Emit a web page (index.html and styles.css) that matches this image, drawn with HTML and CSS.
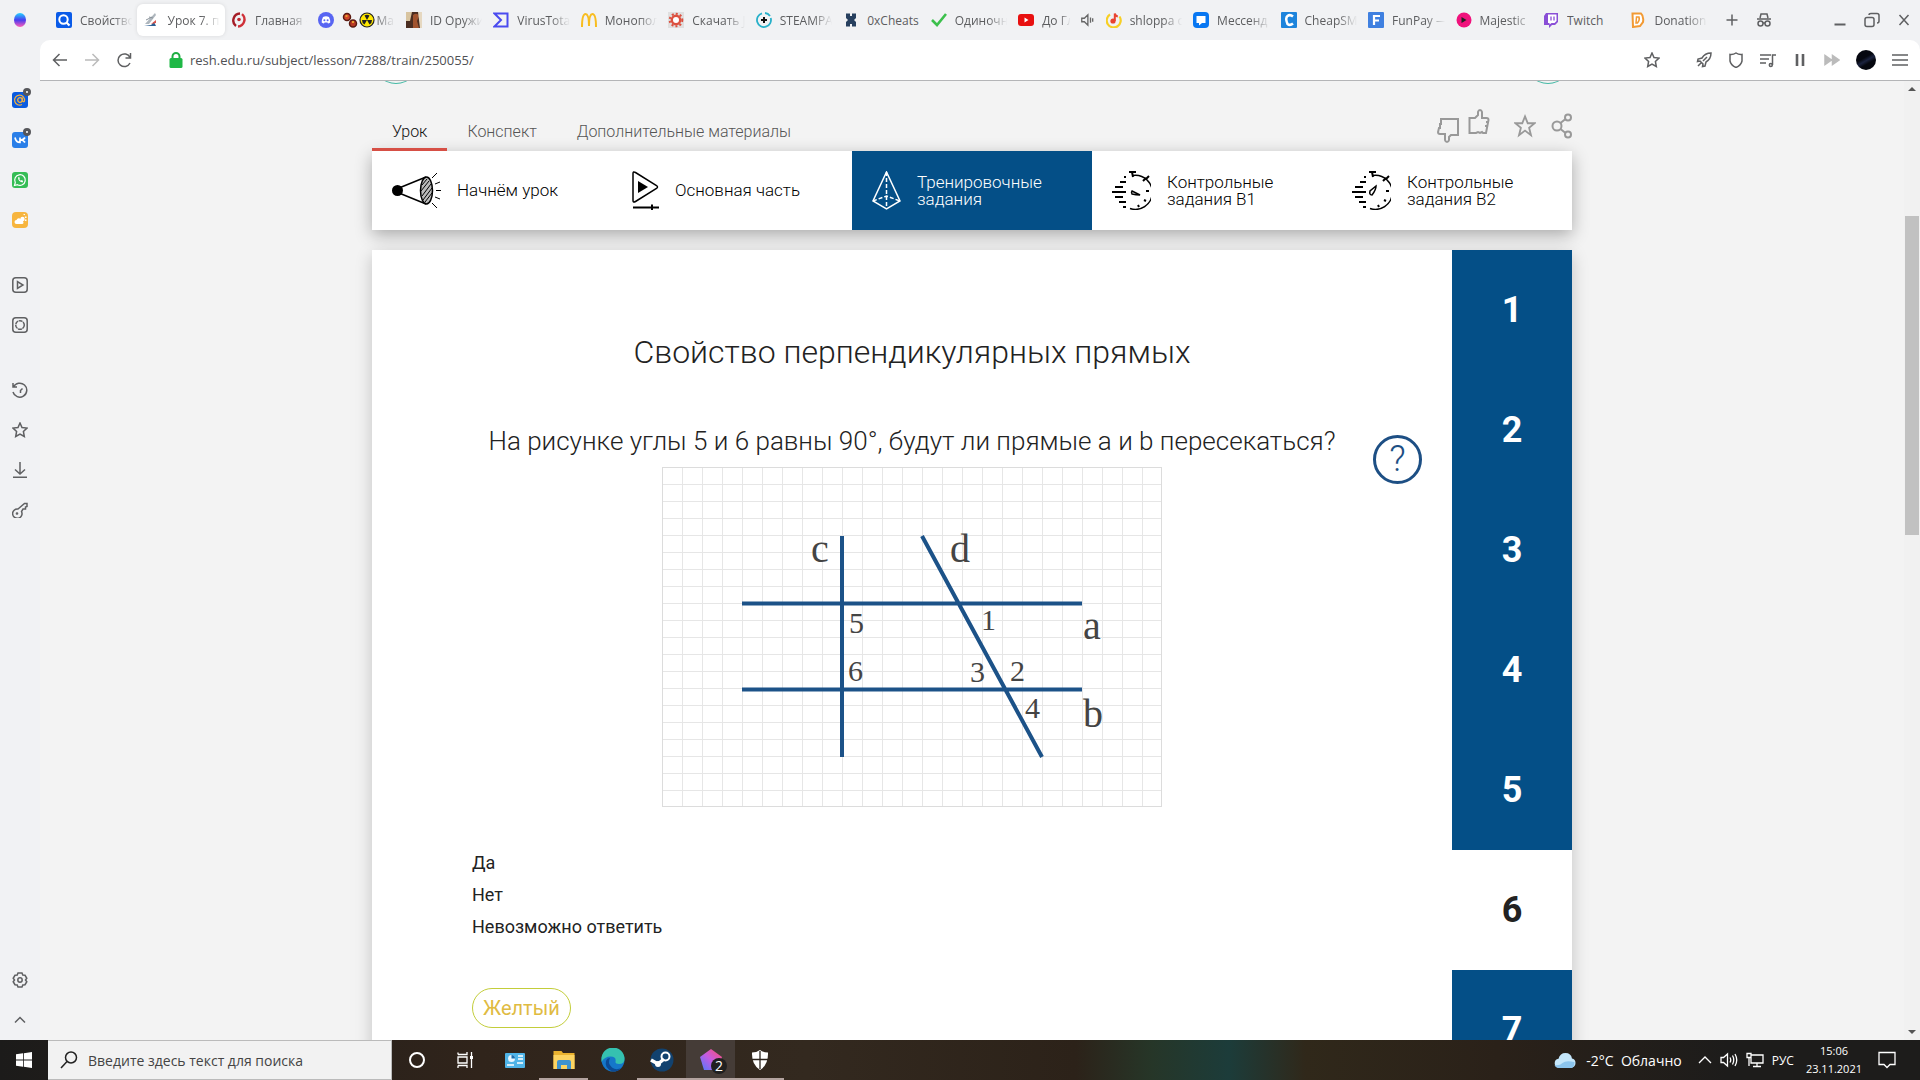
FILE: index.html
```html
<!DOCTYPE html>
<html lang="ru">

<head>
    <meta charset="UTF-8">
    <meta name="viewport" content="width=device-width, initial-scale=1.0">
    <title>Урок 7. Перпендикулярные прямые</title>
    <link rel="stylesheet" href="styles.css">
</head>

<body>
    <div class="browser">
        <header class="tabstrip">
            <svg class="logo" viewBox="0 0 14 16">
                <defs>
                    <linearGradient id="g-logo" x1="0" y1="0" x2="0" y2="1">
                        <stop offset="0" stop-color="#25d4ff" />
                        <stop offset=".5" stop-color="#4a3cf0" />
                        <stop offset="1" stop-color="#ff5fb8" />
                    </linearGradient>
                </defs>
                <ellipse cx="7" cy="8" rx="6" ry="7" fill="url(#g-logo)" />
            </svg>
            <nav class="tabs">
                <a class="tab" href="#">
                    <svg viewBox="0 0 16 16"><rect width="16" height="16" rx="2" fill="#0a5be8" /><circle cx="7.500" cy="7.500" r="4.200" fill="none" stroke="#fff" stroke-width="2" /><path d="M10.500 10.500l3 3" stroke="#fff" stroke-width="2.200" /></svg>
                    <span>Свойство</span>
                </a>
                <a class="tab active" href="#">
                    <svg viewBox="0 0 16 16"><path d="M2 12L12 1l1 2L6 12z" fill="#aeb6bd" /><path d="M3 8l6-3M6 5l4 1" stroke="#8b949c" /><path d="M1 14h12l-2-4-3 3z" fill="#2c5f93" /><path d="M8 12l5-4v3z" fill="#d9534a" /></svg>
                    <span>Урок 7. п</span>
                </a>
                <a class="tab" href="#">
                    <svg viewBox="0 0 16 16"><path d="M9 1.500a7 7 0 0 0-4 12.500" fill="none" stroke="#a51d26" stroke-width="2.400" /><path d="M11 2.200a7 7 0 0 1-4 12.300" fill="none" stroke="#cf3038" stroke-width="2.400" /><circle cx="8" cy="7.500" r="1.800" fill="#c22830" /></svg>
                    <span>Главная –</span>
                </a>
                <a class="tab" href="#">
                    <svg viewBox="0 0 16 16"><circle cx="8" cy="8" r="8" fill="#5865f2" /><path d="M5 5q3-1.500 6 0 1.500 3 1.300 5.500-1.300 1-2.300 1l-.6-1H6.600l-.6 1q-1 0-2.300-1Q3.500 8 5 5z" fill="#fff" /><circle cx="6.400" cy="8.200" r="1" fill="#5865f2" /><circle cx="9.600" cy="8.200" r="1" fill="#5865f2" /></svg>
                    <span class="emoji">
                        <svg viewBox="0 0 16 16"><circle cx="5" cy="5" r="3.500" fill="#d1462b" stroke="#5a1a10" stroke-width="1.500" /><circle cx="11" cy="11.500" r="3.500" fill="#b93a25" stroke="#5a1a10" stroke-width="1.500" /><path d="M3.500 4h2M10 10h2" stroke="#e8a02d" stroke-width="2" /></svg>
                        <svg viewBox="0 0 16 16"><circle cx="8" cy="8" r="7" fill="#ffe800" stroke="#222" stroke-width="1.200" /><path d="M8 8L5.500 3.500A5.500 5.500 0 0 1 10.500 3.500zM8 8H3a5 5 0 0 0 2.500 4.500zM8 8h5a5 5 0 0 1-2.500 4.500z" fill="#222" /></svg>Ма
                    </span>
                </a>
                <a class="tab" href="#">
                    <svg viewBox="0 0 16 16"><rect width="16" height="16" fill="#4b2e22" /><path d="M0 0h6l-2 9H0z" fill="#d8c4a0" /><path d="M7 3q4-3 6 1l-2 5 2 7H7z" fill="#a1542f" /><path d="M12 0h4v16h-2z" fill="#e6d8c0" /></svg>
                    <span>ID Оружи</span>
                </a>
                <a class="tab" href="#">
                    <svg viewBox="0 0 16 16"><path d="M1.500 1.500h13v13h-13L8 8z" fill="none" stroke="#4a4bef" stroke-width="2" /></svg>
                    <span>VirusTotal</span>
                </a>
                <a class="tab" href="#">
                    <svg viewBox="0 0 16 16"><path d="M1 15C1 7 2 2 4.500 2S8 8 8 14c0-6 1-12 3.500-12S15 7 15 15" fill="none" stroke="#f8bd20" stroke-width="2" /></svg>
                    <span>Монопол</span>
                </a>
                <a class="tab" href="#">
                    <svg viewBox="0 0 16 16"><rect width="16" height="16" fill="#e0dfdf" /><circle cx="8" cy="8" r="4.200" fill="#fff" stroke="#dc503f" stroke-width="2.400" /><circle cx="8" cy="8" r="6.300" fill="none" stroke="#dc503f" stroke-width="2" stroke-dasharray="2 2.100" /></svg>
                    <span>Скачать J</span>
                </a>
                <a class="tab" href="#">
                    <svg viewBox="0 0 16 16"><path d="M6 1.300A7 7 0 1 0 14.700 6M9 1a7 7 0 0 1 5 3" fill="none" stroke="#27b0c9" stroke-width="1.800" /><path d="M8 5v6M5 8h6" stroke="#111" stroke-width="2" /></svg>
                    <span>STEAMPA</span>
                </a>
                <a class="tab" href="#">
                    <svg viewBox="0 0 16 16"><path d="M3 1.500h4v2.500h2V1.500h4V6l-2 2 2 2v4.500H9V12H7v2.500H3V10l2-2-2-2z" fill="#27405f" /></svg>
                    <span class="full">0xCheats</span>
                </a>
                <a class="tab" href="#">
                    <svg viewBox="0 0 16 16"><path d="M1 8l5 5 9-11" fill="none" stroke="#3cc04c" stroke-width="2.600" /></svg>
                    <span>Одиночн</span>
                </a>
                <a class="tab" href="#">
                    <svg viewBox="0 0 16 16"><rect y="2" width="16" height="12" rx="3" fill="#e81010" /><path d="M6.500 5.500v5l4-2.500z" fill="#fff" /></svg>
                    <span>До Гл</span>
                    <svg class="sound" viewBox="0 0 16 16"><path d="M2 6v4h3l4 4V2L5 6zM12 5v6M14.500 6v4" fill="none" stroke="#666" stroke-width="1.500" /></svg>
                </a>
                <a class="tab" href="#">
                    <svg viewBox="0 0 16 16"><path d="M4 2.500a7 7 0 1 0 9.500 2" fill="none" stroke="#f7cf25" stroke-width="2.200" /><circle cx="7" cy="9" r="2.600" fill="#e9422f" /><path d="M8.800 9V1.500q.5 2.500 3 3" fill="none" stroke="#e9422f" stroke-width="2" /></svg>
                    <span>shloppa c</span>
                </a>
                <a class="tab" href="#">
                    <svg viewBox="0 0 16 16"><rect width="16" height="16" rx="4" fill="#0877f2" /><path d="M3.500 4h9v7H9l-3 2.500V11H3.500z" fill="#fff" /></svg>
                    <span>Мессенд</span>
                </a>
                <a class="tab" href="#">
                    <svg viewBox="0 0 16 16"><rect width="16" height="16" rx="1" fill="#1d84dc" /><path d="M12 4.500Q9 2 6.500 4t0 8q2.500 2 5.500-.5" fill="none" stroke="#fff" stroke-width="2.500" /></svg>
                    <span>CheapSM</span>
                </a>
                <a class="tab" href="#">
                    <svg viewBox="0 0 16 16"><rect width="16" height="16" rx="1" fill="#3f80e0" /><path d="M6 13V4h6M6 8.500h5" fill="none" stroke="#fff" stroke-width="2.200" /></svg>
                    <span>FunPay —</span>
                </a>
                <a class="tab" href="#">
                    <svg viewBox="0 0 16 16"><circle cx="8" cy="8" r="7.500" fill="#f0127c" /><path d="M5.500 5v6l5-3z" fill="#222" /></svg>
                    <span>Majestic</span>
                </a>
                <a class="tab" href="#">
                    <svg viewBox="0 0 16 16"><path d="M3 1h12v9l-3 3H9l-3 3v-3H1V4z" fill="#8a4fd6" /><path d="M5 2.500h8.500V9l-2 2H8.500L6.500 12.500V11H5z" fill="#fff" /><path d="M8 4.500v4M11 4.500v4" stroke="#8a4fd6" stroke-width="1.300" /></svg>
                    <span class="full">Twitch</span>
                </a>
                <a class="tab" href="#">
                    <svg viewBox="0 0 16 16"><path d="M2.500 1.500H11Q14 4 13 10l-3 4-7 1z" fill="#fff" stroke="#f29a33" stroke-width="2" /><path d="M6.500 5H9q1 3-1.500 6H6z" fill="none" stroke="#f29a33" stroke-width="1.500" /></svg>
                    <span>Donation</span>
                </a>
            </nav>
            <div class="strip-buttons">
                <button aria-label="Новая вкладка"><svg viewBox="0 0 16 16"><path d="M8 2.500v11M2.500 8h11" /></svg></button>
                <button aria-label="Инкогнито"><svg viewBox="0 0 16 16"><path d="M4 6l1-4h6l1 4M1 7h14" /><circle cx="4.500" cy="11.500" r="2.500" /><circle cx="11.500" cy="11.500" r="2.500" /><path d="M7 11h2" /></svg></button>
            </div>
            <div class="window-buttons">
                <button aria-label="Свернуть"><svg viewBox="0 0 16 16"><path d="M2.500 12.500h11" stroke-width="2" /></svg></button>
                <button aria-label="Развернуть"><svg viewBox="0 0 16 16"><rect x="1" y="5.500" width="9" height="9" rx="2" /><path d="M5 3Q5 1.500 7 1.500h6q2 0 2 2V9q0 2-2 2" /></svg></button>
                <button aria-label="Закрыть"><svg viewBox="0 0 16 16"><path d="M3.500 3l9 10M12.500 3l-9 10" /></svg></button>
            </div>
        </header>

        <div class="middle">
            <aside class="sidebar">
                <div class="side-group apps">
                    <a href="#" aria-label="Почта"><svg viewBox="0 0 16 16"><rect width="16" height="16" rx="3" fill="#0a5be0" /><circle cx="8" cy="8" r="2.300" fill="none" stroke="#f5b13d" stroke-width="1.300" /><path d="M10.300 5.500v3q.8 2 2.200.5A5 5 0 1 0 10 12.500" fill="none" stroke="#f5b13d" stroke-width="1.200" /></svg><i class="badge"></i></a>
                    <a href="#" aria-label="ВКонтакте"><svg viewBox="0 0 16 16"><rect width="16" height="16" rx="3" fill="#2a7fe8" /><path d="M3 5.500Q4 10.500 8 10.500V5.500M13 5.500Q11.500 8 8.500 8 11.500 8 13 10.500" fill="none" stroke="#fff" stroke-width="1.700" /></svg><i class="badge"></i></a>
                    <a href="#" aria-label="WhatsApp"><svg viewBox="0 0 16 16"><rect width="16" height="16" rx="3" fill="#35bd55" /><path d="M2.500 13.500l.8-3a5.300 5.300 0 1 1 2.200 2.200z" fill="none" stroke="#fff" stroke-width="1.200" /><path d="M6 5.500q0 4 4.500 5l.7-1.500-1.500-1-.8.7Q7.800 8 7.300 7l.6-.7-.8-1.400z" fill="#fff" /></svg></a>
                    <a href="#" aria-label="Погода"><svg viewBox="0 0 16 16"><rect width="16" height="16" rx="4" fill="#f7b53e" /><circle cx="10.500" cy="7" r="2.200" fill="#fff" /><path d="M12 3l.5-1M13 5.500l1.500-.5M13 8l1.500.5" stroke="#fff" /><path d="M4.500 12a2 2 0 0 1 0-4q1-2.500 3.500-1.500 1.500 1 1.500 2 2 0 2 2 0 1.500-1.500 1.500z" fill="#fff" /></svg></a>
                </div>
                <div class="side-group">
                    <a href="#" aria-label="Видео"><svg viewBox="0 0 16 16"><rect x=".8" y=".8" width="14.400" height="14.400" rx="3" /><path d="M5.500 4.500v7l5.500-3.500z" /></svg></a>
                    <a href="#" aria-label="Снимок"><svg viewBox="0 0 16 16"><rect x=".8" y=".8" width="14.400" height="14.400" rx="3" /><circle cx="8" cy="8" r="4.300" stroke-dasharray="4 .6" /></svg></a>
                </div>
                <div class="side-group">
                    <a href="#" aria-label="История"><svg viewBox="0 0 16 16"><path d="M1 1v4h4M1.500 5A7 7 0 1 1 1 10M8.500 8.500l2-2M8.500 8v3" /></svg></a>
                    <a href="#" aria-label="Избранное"><svg viewBox="0 0 16 16"><path d="M8 1l2 4.500 5 .6-3.600 3.400.9 5L8 12l-4.300 2.500.9-5L1 6.100l5-.6z" /></svg></a>
                    <a href="#" aria-label="Загрузки"><svg viewBox="0 0 16 16"><path d="M8 0v12M3 7.500l5 4.500 5-4.500M1 15.200h14" /></svg></a>
                    <a href="#" aria-label="Пароли"><svg viewBox="0 0 16 16"><path d="M6 7L12.500 1.500H15v3l-1.500.5v2H11L9.500 9.500a4.700 4.700 0 1 1-3.500-2.500z" /><circle cx="5" cy="11.500" r=".6" /></svg></a>
                </div>
                <div class="side-group bottom">
                    <a href="#" aria-label="Настройки"><svg viewBox="0 0 16 16"><path d="M6 1h4l.8 2 2.200.3 1.800 3L13.500 8l1.300 1.700-1.800 3-2.200.3L10 15H6l-.8-2-2.200-.3-1.800-3L2.500 8 1.200 6.300l1.800-3L5.200 3z" /><circle cx="8" cy="8" r="2.200" /></svg></a>
                    <a href="#" aria-label="Вверх"><svg viewBox="0 0 16 16"><path d="M3 10.500l5-5 5 5" /></svg></a>
                </div>
            </aside>

            <div class="window">
                <div class="toolbar">
                    <button aria-label="Назад"><svg viewBox="0 0 16 16"><path d="M15 8H2M7.500 2L1.500 8l6 6" /></svg></button>
                    <button class="off" aria-label="Вперёд"><svg viewBox="0 0 16 16"><path d="M1 8h13M8.500 2l6 6-6 6" /></svg></button>
                    <button aria-label="Обновить"><svg viewBox="0 0 16 16"><path d="M14.500 1v5h-5M14 5.500A6.300 6.300 0 1 0 14 11" /></svg></button>
                    <svg class="lock" viewBox="0 0 14 16"><path d="M3.500 7V4.500a3.500 3.500 0 0 1 7 0V7" fill="none" stroke="#1fae43" stroke-width="2" /><rect x=".5" y="6" width="13" height="10" rx="1.500" fill="#1fb846" /></svg>
                    <input class="address" type="text" aria-label="Адрес" value="resh.edu.ru/subject/lesson/7288/train/250055/">
                    <button class="fav" aria-label="В избранное"><svg viewBox="0 0 16 16"><path d="M8 1l2 4.500 5 .6-3.600 3.400.9 5L8 12l-4.300 2.500.9-5L1 6.100l5-.6z" /></svg></button>
                    <button aria-label="Турбо"><svg viewBox="0 0 16 16"><path d="M15 1q-6 0-9 5L2 7l-.5 2.500L4 9l3 3-.5 2.500L9 14l1-4q5-3 5-9zM2 14l3.500-3.500M11 5L7 9" /></svg></button>
                    <button aria-label="Защита"><svg viewBox="0 0 16 16"><path d="M8 1Q5 3 2 2.500V9q1 4.500 6 6.500 5-2 6-6.500V2.500Q11 3 8 1z" /></svg></button>
                    <button aria-label="Плейлист"><svg viewBox="0 0 16 16"><path d="M0 3h11M0 7h9M0 11h6M12.500 13V3H16" /><circle cx="10.800" cy="13" r="1.500" /></svg></button>
                    <button aria-label="Пауза"><svg viewBox="0 0 16 16"><path d="M5 2v12M11 2v12" stroke-width="2.600" /></svg></button>
                    <button class="off" aria-label="Следующий"><svg viewBox="0 0 16 16"><path d="M1 3.500v9L7.500 8zM8.500 3.500v9L15 8z" fill="#bbb" /></svg></button>
                    <button class="avatar" aria-label="Профиль"></button>
                    <button aria-label="Меню"><svg viewBox="0 0 16 16"><path d="M0 3h16M0 8h16M0 13h16" /></svg></button>
                </div>

                <div class="viewport">
                    <main class="page">
                        <div class="lesson-arrows">
                            <a href="#" aria-label="Предыдущий урок"></a>
                            <a href="#" aria-label="Следующий урок"></a>
                        </div>
                        <div class="lesson-head">
                            <nav class="lesson-tabs">
                                <a class="active" href="#">Урок</a>
                                <a href="#">Конспект</a>
                                <a href="#">Дополнительные материалы</a>
                            </nav>
                            <div class="reactions">
                                <button class="dislike" aria-label="Не нравится"><svg viewBox="0 0 22 26"><path d="M4 2h17v16H14l-2 2v3q-.5 2-2 2t-2-2v-6H3q-2 0-2-2l1-4h1L3 7h1z" /></svg></button>
                                <button class="like" aria-label="Нравится"><svg viewBox="0 0 22 26"><path d="M1.500 24V9H7l3-3V3q.5-2 2-2t2 2v6h4.500q2 0 2 2L18 24H15l-1-1-2 1-2-1-2 1zM18 13h3M17 17h3" /></svg></button>
                                <button class="star" aria-label="В избранное"><svg viewBox="0 0 24 26"><path d="M12 2.500l3 7.500h7.500l-6 5 2 8L12 18l-6.500 5 2-8-6-5H9z" /></svg></button>
                                <button aria-label="Поделиться"><svg viewBox="-2 0 22 26"><circle cx="5" cy="13" r="4.500" /><circle cx="16" cy="4.500" r="3" /><circle cx="16" cy="21.500" r="3" /><path d="M8.500 10l5-4M8.500 16l5 4" /></svg></button>
                            </div>
                        </div>

                        <nav class="steps">
                            <a href="#">
                                <svg width="49" height="39" viewBox="0 0 49 39"><circle cx="5.500" cy="19.500" r="5.500" /><path class="ln" d="M7 17L34 6M7 22l27 11" /><ellipse cx="34.500" cy="19.500" rx="6" ry="13.500" fill="#bbb" stroke="#000" stroke-width="1.500" /><path class="thin" d="M30 25L39 13M31 29l9-12M33 31l7-9M29 20l8-10M30 14l5-6" /><path class="thin" d="M40 7l5-5M43 13l5-2M44 19.500h5M43 26l5 2M40 32l5 5" /></svg>
                                <span>Начнём урок</span>
                            </a>
                            <a href="#">
                                <svg width="27" height="39" viewBox="0 0 27 39"><path class="ln" d="M1 2.500Q1 0 3.500 1.500l21 13q2 1.500 0 3L3.500 30.500Q1 32 1 29.500z" /><path d="M6 10v12l10-6z" /><path d="M1 36.500h26" stroke="#000" stroke-width="2" /><path d="M20 33.500v6" stroke="#000" stroke-width="2" /></svg>
                                <span>Основная часть</span>
                            </a>
                            <a class="active" href="#">
                                <svg width="29" height="39" viewBox="0 0 29 39"><path class="ln" d="M14.500 1L1 30l13.500 8L28 30z" /><path class="ln" stroke-dasharray="4 2" d="M14.500 1v37M1 30l13.500-5L28 30" /></svg>
                                <span>Тренировочные задания</span>
                            </a>
                            <a href="#">
                                <svg width="39" height="39" viewBox="0 0 39 39"><path class="ln" d="M21 4.500a17 17 0 1 1-3 33" stroke-width="2" /><path class="thick" d="M17 1h7M20 1l1 5M34 8l3-3M31 10l3-3M37 20h-3M34 30l-2-1M27 36l-1-2" /><path class="thick" d="M12 6h2M8 11h6M3 16h8M0 21h14M3 26h8M7 31h7M11 36h3" /><path class="ln" d="M20 20l8 4q-4 0-8-1-1-2 0-3z" /></svg>
                                <span>Контрольные задания В1</span>
                            </a>
                            <a href="#">
                                <svg width="39" height="39" viewBox="0 0 39 39"><path class="ln" d="M21 4.500a17 17 0 1 1-3 33" stroke-width="2" /><path class="thick" d="M17 1h7M20 1l1 5M34 8l3-3M31 10l3-3M37 20h-3M34 30l-2-1M27 36l-1-2" /><path class="thick" d="M12 6h2M8 11h6M3 16h8M0 21h14M3 26h8M7 31h7M11 36h3" /><path class="ln" d="M24 15q0 4-4 9-3 0-2-4z" /></svg>
                                <span>Контрольные задания В2</span>
                            </a>
                        </nav>

                        <section class="card">
                            <div class="task">
                                <h1>Свойство перпендикулярных прямых</h1>
                                <h2>На рисунке углы 5 и 6 равны 90°, будут ли прямые a и b пересекаться?</h2>
                                <button class="help" aria-label="Подсказка">?</button>
                                <svg class="figure" width="500" height="340" viewBox="0 0 500 340">
                                    <defs>
                                        <pattern id="grid" width="20" height="17" patternUnits="userSpaceOnUse">
                                            <path d="M.5 0v17M0 .5h20" stroke="#e6e6e6" />
                                        </pattern>
                                    </defs>
                                    <rect width="500" height="340" fill="url(#grid)" />
                                    <rect x=".5" y=".5" width="499" height="339" fill="none" stroke="#dcdcdc" />
                                    <path d="M80 136.500h340M80 222.500h340M180 69v221M260 69l120 221" fill="none" stroke="#1c5288" stroke-width="4" />
                                    <g class="letters">
                                        <text x="149" y="95">c</text>
                                        <text x="288" y="95">d</text>
                                        <text x="421" y="172">a</text>
                                        <text x="421" y="260">b</text>
                                    </g>
                                    <g class="angles">
                                        <text x="187" y="166">5</text>
                                        <text x="186" y="214">6</text>
                                        <text x="319" y="163">1</text>
                                        <text x="308" y="215">3</text>
                                        <text x="348" y="214">2</text>
                                        <text x="363" y="251">4</text>
                                    </g>
                                </svg>
                                <ul class="answers">
                                    <li>Да</li>
                                    <li>Нет</li>
                                    <li>Невозможно ответить</li>
                                </ul>
                                <button class="color">Желтый</button>
                            </div>
                            <nav class="numbers">
                                <a href="#">1</a>
                                <a href="#">2</a>
                                <a href="#">3</a>
                                <a href="#">4</a>
                                <a href="#">5</a>
                                <a class="current" href="#">6</a>
                                <a href="#">7</a>
                            </nav>
                        </section>
                    </main>
                    <div class="scrollbar">
                        <i class="up"></i>
                        <div class="track"><div class="thumb"></div></div>
                        <i class="down"></i>
                    </div>
                </div>
            </div>
        </div>
    </div>

    <footer class="taskbar">
        <button class="start" aria-label="Пуск"><svg width="16" height="16" viewBox="0 0 16 16"><path d="M0 2.300L7 1.300V7.600H0zM7.800 1.200L16 0v7.600H7.800zM0 8.400h7v6.300l-7-1zM7.800 8.400H16V16l-8.200-1.200z" fill="#fff" /></svg></button>
        <div class="search">
            <svg width="18" height="18" viewBox="0 0 18 18"><circle cx="11" cy="6.500" r="5.500" fill="none" stroke="#222" stroke-width="1.500" /><path d="M7 10.500L1 17" stroke="#222" stroke-width="1.500" /></svg>
            <input type="text" aria-label="Поиск" placeholder="Введите здесь текст для поиска">
        </div>
        <div class="apps-row">
            <button aria-label="Кортана"><svg viewBox="0 0 24 24"><circle cx="12" cy="12" r="7" fill="none" stroke="#fff" stroke-width="2" /></svg></button>
            <button aria-label="Представление задач"><svg viewBox="0 0 24 24"><path d="M4 6.500v-2M13 4v2.500H4M4 17.500h9V20M4 20v-2.500M4 9h9v6H4zM17.500 4v16" fill="none" stroke="#fff" stroke-width="1.300" /><path d="M17.500 8v3" stroke="#fff" stroke-width="3" /></svg></button>
            <button aria-label="Панель управления"><svg viewBox="0 0 24 24"><rect x="2" y="5" width="20" height="15" rx="1" fill="#4fb4e8" /><circle cx="8.500" cy="10.500" r="3.500" fill="#e9f6ff" /><path d="M8.500 10.500V7a3.500 3.500 0 0 1 3.500 3.500z" fill="#1c6fae" /><path d="M15 8h5M15 11h5M14 15h6M4 17h7" stroke="#fff" stroke-width="1.500" /></svg></button>
            <button class="open" aria-label="Проводник"><svg viewBox="0 0 24 24"><path d="M1.500 3h8l1.500 2h11.500v16H1.500z" fill="#eab22f" /><path d="M1.500 7h21v14H1.500z" fill="#fcd462" /><path d="M5 21v-7q0-2 2-2h10q2 0 2 2v7h-4v-4H9v4z" fill="#3e93cf" /></svg></button>
            <button aria-label="Edge"><svg viewBox="0 0 24 24"><circle cx="12" cy="12" r="11.500" fill="#1577c9" /><path d="M.5 11A11.500 11.500 0 0 1 23.500 11q0 5-5.500 5-4 0-3.500-2.500 1-5-5-5Q3.500 8.500.5 14z" fill="#35c1b0" /><path d="M9 10q-3 5 2 9.500 4 3 9.500.5-4 4-9 3.500Q3 20 5 13q1-3 4-3z" fill="#0c4a94" /></svg></button>
            <button class="open" aria-label="Steam"><svg viewBox="0 0 24 24"><circle cx="12" cy="12" r="11.500" fill="#12426f" /><circle cx="15.500" cy="8.500" r="4" fill="none" stroke="#fff" stroke-width="2" /><circle cx="8" cy="16" r="3" fill="#fff" /><path d="M1 12l7 4 6-5" fill="none" stroke="#fff" stroke-width="3.500" /></svg></button>
            <button class="open current" aria-label="Браузер"><svg viewBox="0 0 24 24"><defs><linearGradient id="g-app" x1="1" y1="0" x2="0" y2="1"><stop offset="0" stop-color="#ff4d6a" /><stop offset=".5" stop-color="#c65be0" /><stop offset="1" stop-color="#4a7cff" /></linearGradient></defs><path d="M12 1l11 8-4 13H5L1 9z" fill="url(#g-app)" /></svg><b>2</b></button>
            <button class="open" aria-label="Безопасность"><svg viewBox="0 0 24 24"><path d="M12 2q-3.500 2.500-8 2.500Q3.500 17 12 22q8.500-5 8-17.500-4.500 0-8-2.500z" fill="#fff" /><path d="M12 3v18M4 11.500h16" stroke="#2c241d" stroke-width="1.300" /></svg></button>
        </div>
        <div class="tray">
            <a class="weather" href="#">
                <svg width="22" height="17" viewBox="0 0 22 17"><path d="M5 16a4.700 4.700 0 0 1-.5-9.300Q6 1 11.500 1T18 6.500q3.500.7 3.500 4.500T17 16z" fill="#c5e7fb" /><path d="M5 16q-3 0-4.500-3 5 1 8-2t12-1q0 6-4 6z" fill="#8cc5ee" /></svg>
                <span>-2°C&nbsp; Облачно</span>
            </a>
            <svg width="14" height="16" viewBox="0 0 14 16"><path d="M1 11l6-6 6 6" /></svg>
            <svg width="18" height="16" viewBox="0 0 18 16"><path d="M1 5.500v5h2.500l4 3.500V2l-4 3.500zM10 5.500q1.500 2.500 0 5M12.500 3.500q2.500 4.500 0 9M15 2q3.500 6 0 12" /></svg>
            <svg width="18" height="16" viewBox="0 0 18 16"><path d="M5 3h12v8H5zM11 11v3M7 14.500h8M1 1.500h4v4H1zM3 5.500V14" /></svg>
            <span class="lang">РУС</span>
            <time>15:06<br>23.11.2021</time>
            <svg class="notes" width="18" height="18" viewBox="0 0 18 18"><path d="M1 1.500h16v12h-5L9 16.500l-3-3H1z" /></svg>
        </div>
    </footer>
</body>

</html>
```

FILE: styles.css
```css
* {
    box-sizing: border-box;
    padding: 0;
    margin: 0;
}

body {
    height: 100vh;
    display: flex;
    flex-direction: column;
    overflow: hidden;
    background: #f1f2f4;
    font-family: Roboto, "Liberation Sans", sans-serif;
    color: #222;
}

a {
    color: inherit;
    text-decoration: none;
}

button {
    border: 0;
    background: none;
    font: inherit;
    color: inherit;
}

svg {
    display: block;
    flex: none;
}

ul {
    list-style: none;
}

.browser {
    flex: 1;
    min-height: 0;
    display: flex;
    flex-direction: column;
}

/* browser tabs */
.tabstrip {
    height: 40px;
    display: flex;
    align-items: center;
    font: 12px "Open Sans", "Noto Sans", sans-serif;
    color: #5c5d5f;
}

.logo {
    width: 14px;
    height: 16px;
    margin: 0 17px 0 13px;
}

.tabs {
    flex: 1;
    min-width: 0;
    display: flex;
    margin-left: 6px;
}

.tab {
    flex: 1 1 0;
    min-width: 0;
    height: 32px;
    display: flex;
    align-items: center;
    gap: 8px;
    padding: 0 2px 0 6px;
    border-radius: 6px;
}

.tab.active {
    background: #fff;
    box-shadow: 0 0 4px rgba(0, 0, 0, 0.1);
}

.tab svg {
    width: 16px;
    height: 16px;
}

.tab span {
    flex: 1;
    min-width: 0;
    overflow: hidden;
    white-space: nowrap;
    -webkit-mask-image: linear-gradient(to right, #000 60%, transparent 95%);
    mask-image: linear-gradient(to right, #000 60%, transparent 95%);
}

.tab .full {
    -webkit-mask-image: none;
    mask-image: none;
}

.tab .emoji {
    display: flex;
    align-items: center;
    gap: 1px;
}

.tab .sound {
    width: 14px;
    margin-right: 4px;
}

.strip-buttons,
.window-buttons {
    display: flex;
    gap: 16px;
}

.strip-buttons {
    margin: 0 60px 0 12px;
}

.window-buttons {
    margin-right: 8px;
}

.strip-buttons svg,
.window-buttons svg,
.toolbar button svg,
.sidebar svg {
    width: 16px;
    height: 16px;
    fill: none;
    stroke: #5f6062;
    stroke-width: 1.5;
}

.middle {
    flex: 1;
    min-height: 0;
    display: flex;
}

/* left panel */
.sidebar {
    width: 40px;
    padding-top: 40px;
    display: flex;
    flex-direction: column;
    gap: 25px;
}

.side-group a {
    position: relative;
    height: 40px;
    display: flex;
    align-items: center;
    justify-content: center;
}

.side-group.bottom {
    margin-top: auto;
}

.side-group.apps svg {
    stroke: none;
}

.badge {
    position: absolute;
    top: 8px;
    right: 9px;
    width: 8px;
    height: 8px;
    border: 3px solid #55565a;
    border-radius: 50%;
    background: #fff;
}

.window {
    flex: 1;
    min-width: 0;
    display: flex;
    flex-direction: column;
}

.toolbar {
    height: 41px;
    display: flex;
    align-items: center;
    gap: 16px;
    padding: 0 12px;
    background: #fff;
    border-bottom: 1px solid #b4b5b7;
    border-radius: 10px 10px 0 0;
}

.toolbar .off svg {
    stroke: #bbb;
}

.lock {
    width: 14px;
    height: 16px;
    margin-left: 21px;
}

.address {
    flex: 1;
    margin-left: -9px;
    border: 0;
    outline: 0;
    background: none;
    font: 13px "Open Sans", "Noto Sans", sans-serif;
    color: #505154;
}

.fav {
    margin-right: 20px;
}

.toolbar .avatar {
    width: 20px;
    height: 20px;
    border-radius: 50%;
    background: linear-gradient(150deg, #05070f 40%, #1b2340, #05070f 65%);
}

.viewport {
    flex: 1;
    min-height: 0;
    display: flex;
    background: #f3f3f3;
}

.scrollbar {
    width: 16px;
    padding: 6px 1px;
    display: flex;
    flex-direction: column;
    align-items: center;
    background: #f1f1f1;
}

.scrollbar .up,
.scrollbar .down {
    border: 4px solid transparent;
    border-top: 0;
    border-bottom-color: #555;
}

.scrollbar .down {
    border-top: 4px solid #555;
    border-bottom: 0;
}

.track {
    flex: 1;
    width: 100%;
}

.thumb {
    height: 34%;
    margin-top: 125px;
    background: #c1c1c1;
}

/* lesson page */
.page {
    flex: 1;
    min-width: 0;
    padding: 0 332px;
    overflow: hidden;
}

.lesson-arrows {
    display: flex;
    justify-content: space-between;
    margin-top: -47px;
}

.lesson-arrows a {
    width: 48px;
    height: 50px;
    border: 1px solid #45b9a5;
    border-radius: 50%;
}

.lesson-head {
    height: 67px;
    display: flex;
    justify-content: space-between;
    align-items: flex-end;
}

.lesson-tabs {
    display: flex;
}

.lesson-tabs a {
    height: 40px;
    padding: 0 20px;
    border-bottom: 3px solid transparent;
    font-size: 16px;
    font-weight: 300;
    line-height: 42px;
    color: #555;
}

.lesson-tabs .active {
    border-color: #d64f45;
    color: #111;
}

.reactions {
    display: flex;
    align-items: center;
    padding-bottom: 8px;
}

.reactions svg {
    width: 22px;
    height: 26px;
    fill: none;
    stroke: #999;
    stroke-width: 2;
}

.reactions .dislike {
    margin: 8px 9px 0 0;
}

.reactions .like {
    margin: 0 24px 8px 0;
}

.reactions .star {
    margin-right: 14px;
}

.steps {
    display: grid;
    grid-template-columns: repeat(5, 1fr);
    height: 79px;
    background: #fff;
    box-shadow: 0 5px 16px rgba(0, 0, 0, 0.3);
}

.steps a {
    display: flex;
    align-items: center;
    gap: 16px;
    padding: 0 20px;
    font-size: 17px;
    font-weight: 300;
    line-height: 17px;
    color: #000;
}

.steps span {
    max-width: 128px;
}

.steps .ln,
.steps .thin,
.steps .thick {
    fill: none;
    stroke: currentColor;
    stroke-width: 1.5;
}

.steps .thin {
    stroke-width: 1;
}

.steps .thick {
    stroke-width: 2;
}

.steps .active {
    background: #044f87;
    color: #fff;
}

.card {
    display: flex;
    margin-top: 20px;
    background: #fff;
    box-shadow: 0 5px 16px rgba(0, 0, 0, 0.2);
}

.task {
    position: relative;
    flex: 1;
    padding: 80px 100px 0;
}

.task h1,
.task h2 {
    font-weight: 300;
    text-align: center;
}

.task h1 {
    font-size: 32px;
    line-height: 44px;
}

.task h2 {
    margin: 49px -40px 8px;
    font-size: 26px;
    line-height: 36px;
}

.help {
    position: absolute;
    top: 185px;
    right: 30px;
    width: 49px;
    height: 49px;
    border: 3px solid #1d4f84;
    border-radius: 50%;
    font-size: 36px;
    font-weight: 300;
    line-height: 43px;
    color: #1d4f84;
}

.figure {
    margin: 0 auto;
}

.figure text {
    font-family: "Liberation Serif", serif;
    fill: #444;
}

.letters text {
    font-size: 40px;
}

.angles text {
    font-size: 30px;
}

.answers {
    padding: 40px 0 45px;
    font-size: 18px;
    line-height: 32px;
}

.color {
    height: 40px;
    padding: 0 10px;
    border: 1px solid #c3cd3a;
    border-radius: 20px;
    font-size: 20px;
    color: #dfbb42;
}

.numbers {
    width: 120px;
    background: #044f87;
}

.numbers a {
    display: block;
    height: 120px;
    font-size: 36px;
    font-weight: 700;
    line-height: 120px;
    text-align: center;
    color: #fff;
}

.numbers .current {
    background: #fff;
    color: #222;
}

/* windows taskbar */
.taskbar {
    height: 40px;
    display: flex;
    background: linear-gradient(to right, #1c1b1a 0, #30241b 25%, #33291f 42%, #2c2219 56%, #263628 60%, #1c3c3a 64%, #30281a 68%, #2a2119 78%, #1d1c1b 90%);
    font: 15px "Open Sans", "Noto Sans", sans-serif;
    color: #fff;
}

.start {
    width: 48px;
    display: flex;
    align-items: center;
    justify-content: center;
}

.search {
    width: 344px;
    display: flex;
    align-items: center;
    gap: 10px;
    padding: 0 12px;
    background: #f2f2f2;
    border: 1px solid #bbb;
    border-left: 0;
}

.search input {
    flex: 1;
    min-width: 0;
    border: 0;
    background: none;
    font: 14px "Open Sans", "Noto Sans", sans-serif;
}

.search input::placeholder {
    color: #444;
}

.apps-row {
    display: flex;
}

.apps-row button {
    position: relative;
    width: 49px;
    display: flex;
    align-items: center;
    justify-content: center;
}

.apps-row svg {
    width: 24px;
    height: 24px;
}

.apps-row .open {
    box-shadow: inset 0 -2px #b3a39f;
}

.apps-row .current {
    background-color: #453c37;
}

.apps-row b {
    position: absolute;
    right: 8px;
    bottom: 6px;
    width: 16px;
    height: 16px;
    border-radius: 50%;
    background: #202020;
    font-size: 14px;
    font-weight: 400;
    line-height: 16px;
}

.tray {
    display: flex;
    align-items: center;
    gap: 8px;
    margin-left: auto;
    padding-right: 24px;
    font-size: 13px;
}

.tray > svg {
    fill: none;
    stroke: #fff;
    stroke-width: 1.3;
}

.weather {
    display: flex;
    align-items: center;
    gap: 10px;
    margin-right: 8px;
    font-size: 14px;
}

.tray .lang {
    font-size: 12px;
}

.tray time {
    margin: 0 8px 0 4px;
    font-size: 11px;
    line-height: 18px;
    text-align: center;
}
```
